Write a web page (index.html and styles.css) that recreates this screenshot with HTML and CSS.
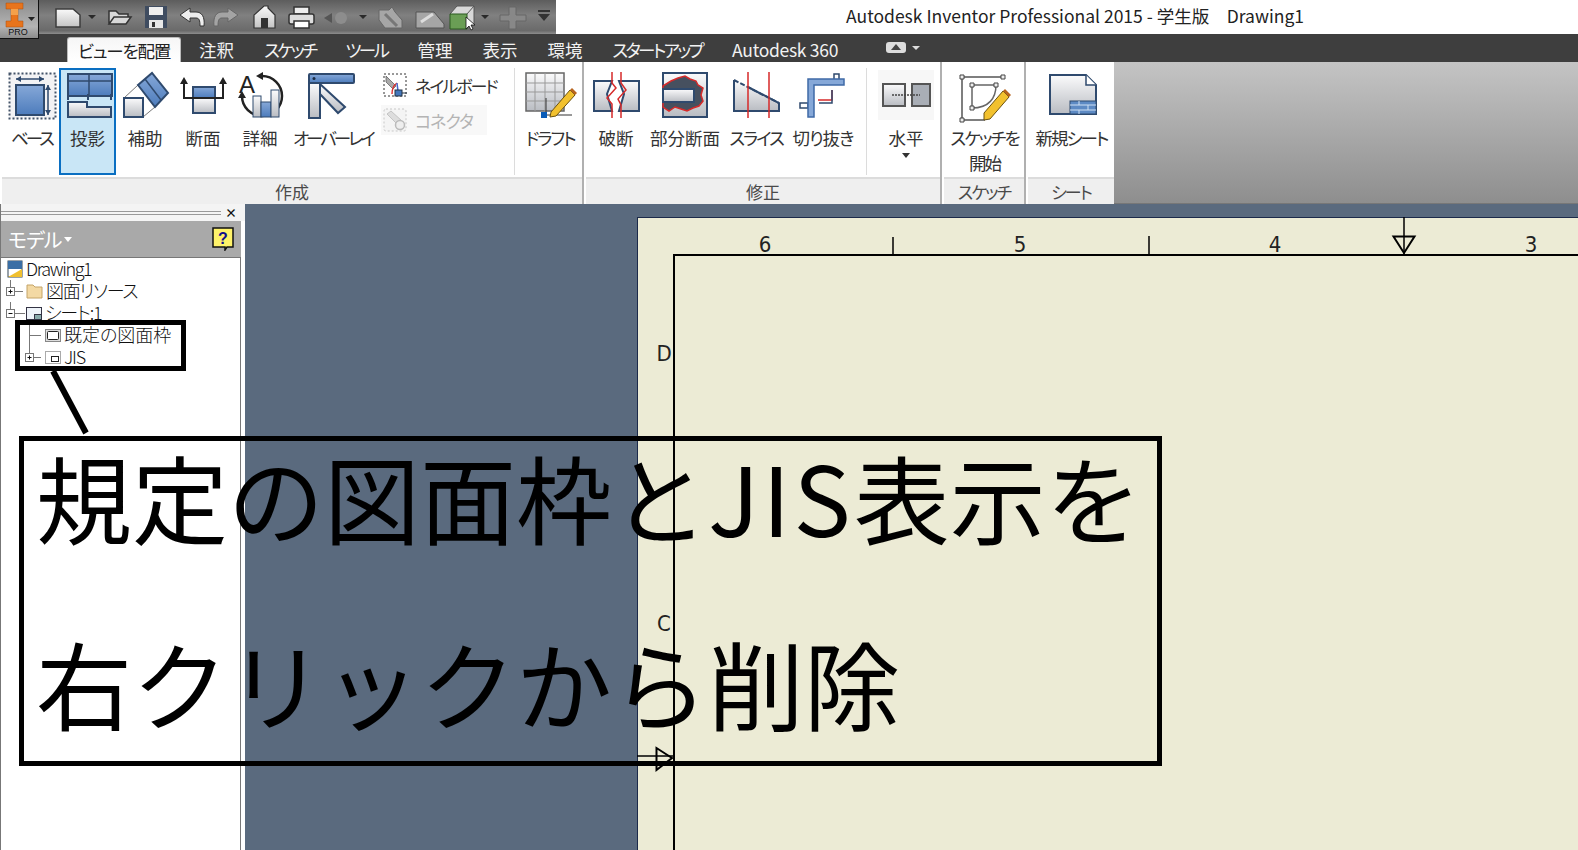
FILE: index.html
```html
<!DOCTYPE html>
<html>
<head>
<meta charset="utf-8">
<title>Autodesk Inventor Professional 2015</title>
<link rel="stylesheet" href="styles.css">
</head>
<body>

<svg class="defs" width="0" height="0">
	<defs>
		<linearGradient id="gGray" x1="0" y1="0" x2="0" y2="1"><stop offset="0" stop-color="#fbfbfc"/><stop offset="1" stop-color="#b9bcc2"/></linearGradient>
		<linearGradient id="gBlue" x1="0" y1="0" x2="0" y2="1"><stop offset="0" stop-color="#86a8d8"/><stop offset="1" stop-color="#4d7cbc"/></linearGradient>
		<linearGradient id="gQat" x1="0" y1="0" x2="0" y2="1"><stop offset="0" stop-color="#fafafa"/><stop offset="1" stop-color="#c4c4c4"/></linearGradient>
	</defs>
</svg>

<div class="titlebar">
	<div class="appbutton">
		<svg width="36" height="36" viewBox="0 0 36 36">
			<path d="M6 3H23V9H18V21H23V27H6V21H11V9H6Z" fill="#e8741c" stroke="#a94e0e" stroke-width=".5"/>
			<path d="M11 9H18V15H11Z" fill="#f4a04a"/>
			<path d="M28 17H35L31.500 21Z" fill="#222"/>
			<text x="18" y="35" class="protext">PRO</text>
		</svg>
	</div>
	<div class="qat">
		<svg width="518" height="33" viewBox="38 0 518 33">
			<!-- new -->
			<path d="M55 9H72L79 15V27H55Z" fill="url(#gQat)" stroke="#3c3c3c" stroke-width="1.500"/>
			<path d="M87 15H95L91 19Z" fill="#2a2a2a"/>
			<!-- open -->
			<path d="M108 24V11H115L118 14H127V17H113L108 24H125L130 17H113" fill="#d8d8d8" stroke="#333" stroke-width="1.500"/>
			<!-- save -->
			<path d="M144 6H166V28H144Z" fill="#3f4c60"/>
			<rect x="148" y="7" width="14" height="8" fill="#eee"/>
			<rect x="148" y="20" width="14" height="8" fill="#e8e8e8"/>
			<rect x="151" y="22" width="3" height="5" fill="#333"/>
			<!-- undo, redo -->
			<path d="M189 8L179 15L189 22V18H195C198 18 199 20 199 26H203C204 17 201 12 195 12H189Z" fill="#eee" stroke="#333"/>
			<path d="M227 8L237 15L227 22V18H221C218 18 217 20 217 26H213C212 17 215 12 221 12H227Z" fill="#a4a4a4" stroke="#666"/>
			<!-- home -->
			<path d="M263 6H267V8L274 15V28H253V15Z" fill="url(#gQat)" stroke="#333" stroke-width="1.200"/>
			<rect x="260" y="18" width="7" height="10" fill="#333"/>
			<!-- print -->
			<rect x="293" y="7" width="15" height="7" fill="#eee" stroke="#333" stroke-width="1.500"/>
			<rect x="288" y="14" width="25" height="10" rx="2" fill="#ddd" stroke="#333" stroke-width="1.500"/>
			<rect x="293" y="21" width="15" height="7" fill="#fff" stroke="#333" stroke-width="1.500"/>
			<!-- disabled group -->
			<circle cx="340" cy="18" r="6" fill="#8d8d8d"/>
			<path d="M323 18L331 13V23Z" fill="#555"/>
			<path d="M358 15H366L362 19Z" fill="#2a2a2a"/>
			<path d="M378 10H388L391 7L394 12L401 20V28H384L378 20Z" fill="#a6a6a6" stroke="#666"/>
			<path d="M384 14L396 26" stroke="#777" stroke-width="3"/>
			<path d="M415 12H433L443 24V28H415Z" fill="#a6a6a6" stroke="#555"/>
			<path d="M420 22L432 14" stroke="#ddd" stroke-width="3"/>
			<!-- view cube -->
			<path d="M449 14L456 6H473V24L466 28Z" fill="#d8d8d8" stroke="#555"/>
			<path d="M449 14H466V29H449Z" fill="#6a9e55" stroke="#2a5a20"/>
			<path d="M466 14L473 6" stroke="#555"/>
			<path d="M465 17V29L468 26L470 30L472 29L470 25H474Z" fill="#fff" stroke="#111" stroke-width=".8"/>
			<path d="M480 15H488L484 19Z" fill="#2a2a2a"/>
			<!-- plus, customize -->
			<path d="M508 7H515V15H525V21H515V29H508V21H499V15H508Z" fill="#888" stroke="#666"/>
			<path d="M537 10H549V12H537ZM537 14H549L543 21Z" fill="#333"/>
		</svg>
	</div>
	<div class="apptitle">Autodesk Inventor Professional 2015 - 学生版　Drawing1</div>
</div>

<div class="tabs">
	<div class="tab active">ビューを配置</div>
	<div class="tab">注釈</div>
	<div class="tab tab-kana">スケッチ</div>
	<div class="tab tab-kana">ツール</div>
	<div class="tab">管理</div>
	<div class="tab">表示</div>
	<div class="tab">環境</div>
	<div class="tab tab-kana">スタートアップ</div>
	<div class="tab tab-latin">Autodesk 360</div>
	<div class="tabswitch">
		<svg width="36" height="14" viewBox="0 0 36 14">
			<rect x="1" y="1" width="20" height="11" rx="3" fill="#ddd"/>
			<path d="M11 3L16 9H6Z" fill="#444"/>
			<path d="M27 5H35L31 9Z" fill="#ddd"/>
		</svg>
	</div>
</div>

<div class="ribbon">
	<div class="panel panel-create">
		<div class="panelbody">
			<div class="btn w55 firstbtn">
				<svg class="icon" viewBox="0 0 56 50">
					<rect x="5.500" y="3.500" width="46" height="45" fill="#f2f2f4" stroke="#44546a" stroke-width="2" stroke-dasharray="2 2"/>
					<rect x="12" y="15" width="28" height="30" fill="url(#gBlue)" stroke="#2f4a6e" stroke-width="2"/>
					<path d="M12 9H40M44 15V45" stroke="#2f4a6e" stroke-width="1.500"/>
					<path d="M12 9L17 6V12ZM40 9L35 6V12ZM44 15L41 20H47ZM44 45L41 40H47Z" fill="#2f4a6e"/>
				</svg>
				<span class="tight3">ベース</span>
			</div>
			<div class="btn w57 selected">
				<svg class="icon" viewBox="0 0 56 50">
					<rect x="8" y="4" width="44" height="22" fill="url(#gBlue)" stroke="#2f4a6e" stroke-width="2"/>
					<path d="M29 4V26M8 11H52" stroke="#2f4a6e" stroke-width="1.500" fill="none"/>
					<path d="M8 24V30M28 24V30M51 24V30" stroke="#2f4a6e" stroke-width="2"/>
					<path d="M8 32H27V37H51V47H8Z" fill="url(#gGray)" stroke="#2f4a6e" stroke-width="2"/>
				</svg>
				<span>投影</span>
			</div>
			<div class="btn w58">
				<svg class="icon" viewBox="0 0 56 50">
					<path d="M7 28L21 15M26 47L38 37" stroke="#777" stroke-width="1"/>
					<rect x="7" y="28" width="19" height="19" fill="url(#gGray)" stroke="#2f4a6e" stroke-width="2"/>
					<path d="M21 15L35 3L51 23L38 37Z" fill="url(#gBlue)" stroke="#2f4a6e" stroke-width="2"/>
					<path d="M28 9L44 30" stroke="#2f4a6e" stroke-width="1.500"/>
				</svg>
				<span>補助</span>
			</div>
			<div class="btn w58">
				<svg class="icon" viewBox="0 0 56 50">
					<rect x="18" y="17" width="22" height="11" fill="url(#gBlue)" stroke="#2f4a6e" stroke-width="2"/>
					<rect x="18" y="28" width="22" height="15" fill="url(#gGray)" stroke="#2f4a6e" stroke-width="2"/>
					<path d="M9 12V28H48V12" fill="none" stroke="#222" stroke-width="2"/>
					<path d="M9 7L5 14H13ZM48 7L44 14H52Z" fill="#222"/>
				</svg>
				<span>断面</span>
			</div>
			<div class="btn w56">
				<svg class="icon" viewBox="0 0 56 50">
					<path d="M30 6A20 20 0 1 1 10 26" fill="none" stroke="#222" stroke-width="2.500"/>
					<path d="M24 6L31 2V10ZM10 21L6 28H14Z" fill="#222"/>
					<text x="15" y="23" class="icontext">A</text>
					<rect x="21" y="26" width="8" height="21" fill="url(#gGray)" stroke="#2f4a6e"/>
					<rect x="29" y="32" width="10" height="15" fill="url(#gBlue)" stroke="#2f4a6e"/>
					<rect x="39" y="20" width="8" height="27" fill="url(#gGray)" stroke="#2f4a6e"/>
				</svg>
				<span>詳細</span>
			</div>
			<div class="btn w90">
				<svg class="icon" viewBox="0 0 56 50">
					<path d="M4 13H15V48H4Z" fill="url(#gGray)" stroke="#2f4a6e" stroke-width="2"/>
					<path d="M15 14L40 37L33 43L15 24Z" fill="url(#gGray)" stroke="#2f4a6e" stroke-width="2"/>
					<rect x="4" y="4" width="45" height="9" rx="1" fill="url(#gBlue)" stroke="#2f4a6e" stroke-width="2"/>
					<circle cx="9" cy="8.500" r="1.500" fill="#1c2c44"/>
				</svg>
				<span class="tight3">オーバーレイ</span>
			</div>
			<div class="smallcol">
				<div class="smallrow">
					<svg width="24" height="24" viewBox="0 0 24 24">
						<rect x="1" y="1" width="22" height="22" fill="#fff" stroke="#333" stroke-dasharray="2 2"/>
						<path d="M3 3L13 13L10 16L3 9Z" fill="#aaa" stroke="#555" stroke-width=".7"/>
						<path d="M9 21C9 15 11 12 14 10" fill="none" stroke="#d33" stroke-width="1.500"/>
						<path d="M15 20C15 15 14 12 14 10" fill="none" stroke="#46c" stroke-width="1.500"/>
						<rect x="12" y="17" width="7" height="6" fill="#47b" stroke="#234"/>
						<path d="M19 20H24" stroke="#234"/>
					</svg>
					<span class="tight2">ネイルボード</span>
				</div>
				<div class="smallrow disabled">
					<svg width="24" height="24" viewBox="0 0 24 24">
						<rect x="1" y="1" width="22" height="22" rx="2" fill="#f4f4f4" stroke="#c8c8c8" stroke-dasharray="2 2"/>
						<path d="M4 6L8 3L19 13L15 17Z" fill="#ddd" stroke="#c4c4c4"/>
						<circle cx="17" cy="17" r="4.500" fill="#eee" stroke="#bbb" stroke-width="1.500"/>
					</svg>
					<span class="tight1">コネクタ</span>
				</div>
			</div>
			<div class="vsep"></div>
			<div class="btn w62 draftbtn">
				<svg class="icon" viewBox="0 0 56 50">
					<rect x="4" y="3" width="38" height="38" fill="url(#gGray)" stroke="#666" stroke-width="1.500"/>
					<path d="M4 13H42M4 22H42M4 31H42M13 3V41M23 3V41M33 3V41" stroke="#999" fill="none"/>
					<path d="M24 28V45M24 45H50" stroke="#333" stroke-width="1"/>
					<rect x="19" y="42" width="6" height="6" fill="#0a5cb8"/>
					<path d="M29 42L48 20L53 25L34 46L28 47Z" fill="#f2c12e" stroke="#6b5210"/>
					<path d="M48 20L50 18L55 23L53 25Z" fill="#b8651e"/>
				</svg>
				<span class="tight2">ドラフト</span>
			</div>
		</div>
		<div class="paneltitle">作成</div>
	</div>

	<div class="panel panel-modify">
		<div class="panelbody">
			<div class="btn w60">
				<svg class="icon" viewBox="0 0 56 50">
					<path d="M6 11H24L19 24L24 41H6Z" fill="url(#gGray)" stroke="#2f4a6e" stroke-width="2"/>
					<path d="M51 11H31L36 24L31 41H51Z" fill="url(#gGray)" stroke="#2f4a6e" stroke-width="2"/>
					<path d="M24 2V13L28 18L19 28L24 34V48M33 2V13L38 20L30 29L33 35V48" fill="none" stroke="#d62a2a" stroke-width="1.500"/>
				</svg>
				<span>破断</span>
			</div>
			<div class="btn w78">
				<svg class="icon" viewBox="0 0 56 50">
					<rect x="6" y="3" width="44" height="44" fill="url(#gGray)" stroke="#2f4a6e" stroke-width="2"/>
					<path d="M6 16L14 11L21 8L28 6L33 9L39 11L41 15L46 18L44 25L46 31L42 36L36 38L30 41L24 39L18 37L12 41L6 37Z" fill="#46505f" stroke="#d62a2a" stroke-width="1.500"/>
					<rect x="6" y="19" width="31" height="13" fill="url(#gGray)" stroke="#2f4a6e" stroke-width="2"/>
				</svg>
				<span>部分断面</span>
			</div>
			<div class="btn w64">
				<svg class="icon" viewBox="0 0 56 50">
					<path d="M6 10V41H51V33L20 17" fill="url(#gGray)" stroke="#2f4a6e" stroke-width="2"/>
					<path d="M6 10L51 33" stroke="#2f4a6e" stroke-width="2" stroke-dasharray="5 2"/>
					<path d="M20 2V48M41 2V48" stroke="#d62a2a" stroke-width="1.500"/>
				</svg>
				<span class="tight2">スライス</span>
			</div>
			<div class="btn w70">
				<svg class="icon" viewBox="0 0 56 50">
					<path d="M39 4H44V13H39ZM5 33H13V38H5Z" fill="#fff" stroke="#2f4a6e" stroke-width="1.500"/>
					<path d="M23 30H37V20" fill="none" stroke="#d62a2a" stroke-width="1.500"/>
					<path d="M37 20V33H24" fill="none" stroke="#2f4a6e" stroke-width="1.500"/>
					<path d="M13 9H49V15H19V47H13Z" fill="#86a8d8" stroke="#3f6aa6" stroke-width="1.500"/>
				</svg>
				<span class="tight1">切り抜き</span>
			</div>
			<div class="vsep vsep-modify"></div>
			<div class="btn w68">
				<svg class="icon" viewBox="0 0 56 50">
					<rect x="0" y="0" width="56" height="50" fill="#f7f7f7"/>
					<rect x="5" y="14" width="22" height="22" fill="url(#gGray)" stroke="#555" stroke-width="2"/>
					<rect x="34" y="14" width="18" height="22" fill="#a9aeb6" stroke="#555" stroke-width="2"/>
					<path d="M14 25H42" stroke="#444" stroke-width="1.500" stroke-dasharray="2 1"/>
				</svg>
				<span>水平</span>
				<i class="drop"></i>
			</div>
		</div>
		<div class="paneltitle">修正</div>
	</div>

	<div class="panel panel-sketch">
		<div class="panelbody">
			<div class="btn w81">
				<svg class="icon" viewBox="4 0 56 50">
					<path d="M9 7H50M9 7V50H32" fill="none" stroke="#555" stroke-width="1.500"/>
					<path d="M19 15H43C43 28 36 38 19 38Z" fill="none" stroke="#666" stroke-width="1.500"/>
					<path d="M7 5h4v4h-4zM48 5h4v4h-4zM7 48h4v4h-4zM17 13h4v4h-4zM41 13h4v4h-4zM17 36h4v4h-4z" fill="#eee" stroke="#444"/>
					<path d="M31 43L50 21L56 27L37 49L31 50Z" fill="#f2c12e" stroke="#6b5210"/>
					<path d="M50 21L52 19L58 25L56 27Z" fill="#b8651e"/>
				</svg>
				<span class="tight2">スケッチを<br>開始</span>
			</div>
		</div>
		<div class="paneltitle"><span class="tight2">スケッチ</span></div>
	</div>

	<div class="panel panel-sheet">
		<div class="panelbody">
			<div class="btn w87">
				<svg class="icon" viewBox="0 0 56 50">
					<path d="M6 5H42L52 15V44H6Z" fill="url(#gGray)" stroke="#2f4a6e" stroke-width="2"/>
					<path d="M42 5V15H52" fill="#fff" stroke="#2f4a6e" stroke-width="1.500"/>
					<rect x="26" y="31" width="26" height="13" fill="#5d8ac4" stroke="#2f4a6e"/>
					<path d="M26 35H52M26 40H52M35 31V35M44 35V40M35 40V44" stroke="#cfe0f4" fill="none"/>
				</svg>
				<span class="tight2">新規シート</span>
			</div>
		</div>
		<div class="paneltitle"><span class="tight2">シート</span></div>
	</div>
	<div class="ribbonrest"></div>
</div>

<div class="main">
	<div class="browser">
		<div class="grip"><div class="griplines"></div><b>×</b></div>
		<div class="browserhead">
			<span class="tight1">モデル</span><i class="headdrop"></i>
			<svg class="helpicon" width="22" height="24" viewBox="0 0 22 24">
				<path d="M1 1H21V20H15L13 23V20H1Z" fill="#fff36a" stroke="#111" stroke-width="1.500"/>
				<text x="11" y="17" class="helptext">?</text>
			</svg>
		</div>
		<div class="tree">
			<div class="treerow">
				<svg width="26" height="22" viewBox="0 0 26 22">
					<rect x="8" y="3" width="14" height="16" fill="#fff" stroke="#345"/>
					<rect x="8" y="3" width="14" height="8" fill="#3a6ea5"/>
					<path d="M8 19L22 11V19Z" fill="#f0c030"/>
				</svg>
				<span class="tree-latin">Drawing1</span>
			</div>
			<div class="treerow">
				<svg width="46" height="22" viewBox="0 0 46 22">
					<path d="M10.500 0V7M15 11.500H23" stroke="#777"/>
					<rect x="6.500" y="7.500" width="8" height="8" fill="#fff" stroke="#777"/>
					<path d="M8.500 11.500H12.500M10.500 9.500V13.500" stroke="#111"/>
					<path d="M27 5H33L35 7H42V18H27Z" fill="#f3d9a4" stroke="#c4a468"/>
				</svg>
				<span>図面リソース</span>
			</div>
			<div class="treerow">
				<svg width="45" height="22" viewBox="0 0 45 22">
					<path d="M10.500 0V7M15 11.500H25" stroke="#777"/>
					<rect x="6.500" y="7.500" width="8" height="8" fill="#fff" stroke="#777"/>
					<path d="M8.500 11.500H12.500" stroke="#111"/>
					<rect x="26.500" y="5.500" width="15" height="12" fill="#eef3f9" stroke="#334"/>
					<rect x="34.500" y="12.500" width="7" height="5" fill="#8aa" stroke="#334"/>
				</svg>
				<span>シート:1</span>
			</div>
			<div class="treerow">
				<svg width="64" height="22" viewBox="0 0 64 22">
					<path d="M29.500 0V22M29.500 11.500H41" stroke="#777"/>
					<rect x="45.500" y="5.500" width="15" height="12" fill="#ddd" stroke="#888"/>
					<rect x="47.500" y="7.500" width="11" height="8" rx="1" fill="#fff" stroke="#222"/>
				</svg>
				<span class="tree-wide">既定の図面枠</span>
			</div>
			<div class="treerow">
				<svg width="64" height="22" viewBox="0 0 64 22">
					<path d="M29.500 0V7M34 11.500H41" stroke="#777"/>
					<rect x="25.500" y="7.500" width="8" height="8" fill="#fff" stroke="#777"/>
					<path d="M27.500 11.500H31.500M29.500 9.500V13.500" stroke="#111"/>
					<rect x="45.500" y="5.500" width="15" height="12" fill="#fff" stroke="#aaa"/>
					<rect x="51.500" y="10.500" width="7" height="5" fill="#fff" stroke="#222"/>
				</svg>
				<span>JIS</span>
			</div>
		</div>
	</div>
	<div class="canvas">
		<svg class="sheet" width="941" height="633" viewBox="0 0 941 633">
			<rect x=".5" y=".5" width="960" height="660" fill="#ecebd5" stroke="#1c2a4a"/>
			<path d="M37 38H941" stroke="#000" stroke-width="2"/>
			<path d="M37 37V633" stroke="#000" stroke-width="2"/>
			<path d="M256 20V38M512 19V38M767 0V38" stroke="#000" stroke-width="1.500"/>
			<path d="M756.500 19.500H777.500L767 36Z" fill="none" stroke="#000" stroke-width="2"/>
			<path d="M0 539H36" stroke="#000" stroke-width="1.500"/>
			<path d="M19.500 531L35 541L19.500 553Z" fill="none" stroke="#000" stroke-width="2"/>
			<text x="128" y="35" class="sheettext">6</text>
			<text x="383" y="35" class="sheettext">5</text>
			<text x="638" y="35" class="sheettext">4</text>
			<text x="894" y="35" class="sheettext">3</text>
			<text x="27" y="144" class="sheettext">D</text>
			<text x="27" y="414" class="sheettext">C</text>
		</svg>
	</div>
</div>

<div class="callout"></div>
<svg class="leader" width="60" height="80" viewBox="0 0 60 80">
	<path d="M5 2L38 64" stroke="#000" stroke-width="6"/>
</svg>
<div class="note">
	<div>規定の図面枠と<span class="note-latin">JIS</span>表示を</div>
	<div>右クリックから削除</div>
</div>

</body>
</html>
```

FILE: styles.css
```css
html, body {
	margin: 0;
	padding: 0;
	width: 1578px;
	height: 850px;
	overflow: hidden;
}
body {
	position: relative;
	background-color: white;
	font-family: "Noto Sans CJK JP", "Noto Sans", sans-serif;
	font-feature-settings: "palt";
	font-size: 17px;
	color: #333;
}
.defs {
	display: block;
	height: 0;
}
.tight1 { letter-spacing: -1px; }
.tight2 { letter-spacing: -2px; }
.tight3 { letter-spacing: -3px; }

/* title bar */
.titlebar {
	display: flex;
	height: 34px;
}
.appbutton {
	position: relative;
	z-index: 2;
	flex: none;
	box-sizing: border-box;
	width: 39px;
	height: 39px;
	background: linear-gradient(#8a8a8a, #b4b4b4 70%, #8c8c8c);
	border-right: 1px solid #111;
	border-bottom: 1px solid #111;
}
.protext {
	font-family: "Liberation Sans", sans-serif;
	font-size: 9px;
	text-anchor: middle;
	fill: #111;
}
.qat {
	flex: none;
	width: 517px;
	height: 34px;
	background: linear-gradient(#5d5d5d, #808080 45%, #6a6a6a 90%, #8d8d8d);
}
.qat svg {
	display: block;
}
.apptitle {
	margin-left: 290px;
	line-height: 32px;
	font-size: 17.500px;
	color: #222;
	white-space: pre;
}

/* ribbon tabs */
.tabs {
	display: flex;
	gap: 30px;
	height: 28px;
	padding-left: 67px;
	background-color: #3e3e3e;
	color: #f2f2f2;
	line-height: 31px;
	font-size: 17.500px;
}
.tab {
	white-space: nowrap;
}
.tab-kana {
	letter-spacing: -2.600px;
}
.tab-latin {
	letter-spacing: -.3px;
}
.tab.active {
	box-sizing: border-box;
	width: 114px;
	height: 25px;
	margin: 3px -12px 0 0;
	background: linear-gradient(#f6f6f6, #ffffff);
	border: 1px solid #bbb;
	border-bottom: 0;
	border-radius: 3px 3px 0 0;
	color: #222;
	text-align: center;
	line-height: 26px;
	letter-spacing: -1.200px;
}
.tabswitch {
	margin: 7px 0 0 17px;
}
.tabswitch svg {
	display: block;
}

/* ribbon */
.ribbon {
	display: flex;
	height: 142px;
	background-color: white;
}
.panel {
	flex: none;
	display: flex;
	flex-direction: column;
	box-sizing: border-box;
	border-right: 2px solid #b0b0b0;
	padding-left: 2px;
}
.panel-create { width: 584px; }
.panel-modify { width: 358px; }
.panel-sketch { width: 84px; }
.panel-sheet { width: 88px; border-right: 0; }
.panelbody {
	display: flex;
	flex: none;
	height: 115px;
	padding-top: 6px;
	box-sizing: border-box;
}
.paneltitle {
	flex: 1;
	background-color: #efefef;
	border-top: 2px solid #dcdcdc;
	border-bottom: 1px solid #a8a8a8;
	text-align: center;
	line-height: 25px;
	font-size: 17px;
	color: #4a4a4a;
}
.ribbonrest {
	flex: 1;
	background: linear-gradient(#c4c4c4, #8e8e8e);
	border-bottom: 1px solid #777;
}
.btn {
	flex: none;
	display: flex;
	flex-direction: column;
	align-items: center;
	box-sizing: border-box;
	height: 107px;
	text-align: center;
	line-height: 25px;
	font-size: 17.500px;
	white-space: nowrap;
}
.firstbtn {
	margin-left: 2px;
}
.draftbtn {
	margin-left: 3px;
}
.btn.selected {
	background-color: #c9e6f6;
	outline: 2px solid #0a6fc2;
	outline-offset: -2px;
}
.icon {
	flex: none;
	width: 56px;
	height: 50px;
	margin: 2px 0 5px;
	overflow: visible;
}
.icontext {
	font-family: "Liberation Sans", sans-serif;
	font-size: 24px;
	fill: #222;
	text-anchor: middle;
}
.w55 { width: 55px; }
.w56 { width: 56px; }
.w57 { width: 57px; }
.w58 { width: 58px; }
.w60 { width: 60px; }
.w62 { width: 62px; }
.w64 { width: 64px; }
.w68 { width: 68px; }
.w70 { width: 70px; }
.w78 { width: 78px; }
.w81 { width: 81px; }
.w87 { width: 87px; }
.w90 { width: 90px; }
.drop {
	width: 0;
	height: 0;
	margin-top: 3px;
	border-left: 4px solid transparent;
	border-right: 4px solid transparent;
	border-top: 5px solid #333;
}
.smallcol {
	flex: none;
	width: 136px;
	padding: 2px 0 0 3px;
	box-sizing: border-box;
}
.smallrow {
	display: flex;
	align-items: center;
	gap: 8px;
	height: 30px;
	margin-bottom: 5px;
	padding-left: 2px;
	white-space: nowrap;
}
.smallrow.disabled {
	width: 104px;
	background-color: #f8f8f8;
	color: #b4b4b4;
}
.vsep {
	flex: none;
	width: 1px;
	height: 107px;
	margin-right: 1px;
	background-color: #dcdcdc;
}
.vsep-modify {
	margin: 0 5px 0 8px;
}

/* main area */
.main {
	display: flex;
	height: 646px;
}
.browser {
	flex: none;
	box-sizing: border-box;
	width: 245px;
	background-color: white;
	border-left: 1px solid #777;
}
.grip {
	display: flex;
	align-items: center;
	gap: 4px;
	height: 17px;
	padding-right: 8px;
	background-color: #f4f4f4;
}
.griplines {
	flex: 1;
	height: 2px;
	border-top: 1px solid #999;
	border-bottom: 1px solid #999;
}
.grip b {
	font-size: 12px;
	line-height: 12px;
	color: #111;
}
.browserhead {
	display: flex;
	align-items: center;
	box-sizing: border-box;
	width: 240px;
	height: 36px;
	padding-left: 7px;
	background-color: #a9a9a9;
	font-size: 20px;
	color: white;
}
.headdrop {
	width: 0;
	height: 0;
	margin-left: 3px;
	border-left: 4px solid transparent;
	border-right: 4px solid transparent;
	border-top: 5px solid white;
}
.helpicon {
	margin-left: auto;
	margin-right: 7px;
}
.helptext {
	font-family: "Liberation Sans", sans-serif;
	font-weight: bold;
	font-size: 16px;
	fill: #12128a;
	text-anchor: middle;
}
.tree {
	box-sizing: border-box;
	width: 240px;
	height: 593px;
	border-top: 1px solid #777;
	border-right: 1px solid #777;
	font-size: 18px;
	font-weight: 300;
	color: #111;
}
.treerow {
	display: flex;
	height: 22px;
	margin-left: -1px;
	white-space: nowrap;
	letter-spacing: -1.200px;
	line-height: 20px;
}
.treerow svg {
	flex: none;
}
.tree-latin {
	letter-spacing: -1.400px;
}
.tree-wide {
	letter-spacing: 0;
}
.canvas {
	flex: 1;
	overflow: hidden;
	background-color: #5a6a7e;
	padding: 13px 0 0 392px;
}
.sheet {
	display: block;
}
.sheettext {
	font-family: "DejaVu Sans Condensed", "Liberation Sans", sans-serif;
	font-size: 22px;
	fill: #222;
	text-anchor: middle;
}

/* annotations lying over the window */
.callout {
	position: absolute;
	left: 15px;
	top: 320px;
	box-sizing: border-box;
	width: 171px;
	height: 51px;
	border: 5px solid black;
}
.leader {
	position: absolute;
	left: 48px;
	top: 369px;
}
.note {
	position: absolute;
	left: 19px;
	top: 436px;
	box-sizing: border-box;
	width: 1143px;
	height: 330px;
	padding-left: 12px;
	display: flex;
	flex-direction: column;
	gap: 76px;
	border: 5px solid black;
	font-size: 96px;
	line-height: 110px;
	color: black;
	font-feature-settings: normal;
	white-space: nowrap;
}
.note-latin {
	letter-spacing: 3px;
}
```
